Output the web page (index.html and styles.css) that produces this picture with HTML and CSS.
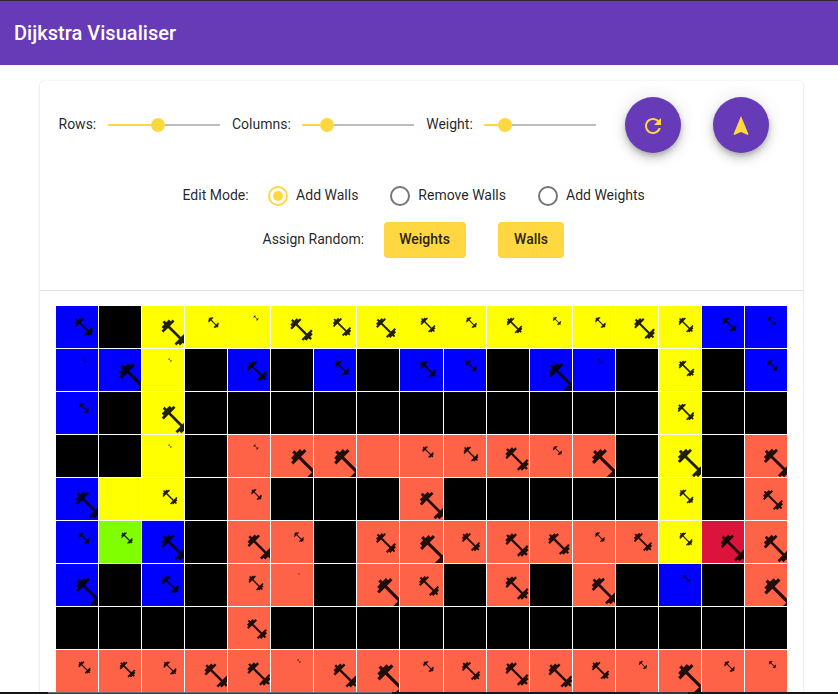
FILE: index.html
```html
<!DOCTYPE html>
<html lang="en">
<head>
<meta charset="utf-8">
<title>Dijkstra Visualiser</title>
<link rel="stylesheet" href="styles.css">
</head>
<body>
<svg class="sprite" aria-hidden="true">
  <symbol id="dumbbell" viewBox="0 0 24 24"><path d="M20.57 14.86L22 13.43 20.57 12 17 15.57 8.43 7 12 3.43 10.57 2 9.14 3.43 7.71 2 5.57 4.14 4.14 2.71 2.71 4.14l1.43 1.43L2 7.71l1.43 1.43L2 10.57 3.43 12 7 8.43 15.57 17 12 20.57 13.43 22l1.43-1.43L16.29 22l2.14-2.14 1.43 1.43 1.43-1.43-1.43-1.43L22 16.29z"/></symbol>
</svg>
<header class="toolbar"><h1 class="title">Dijkstra Visualiser</h1></header>
<main class="card">
  <section class="controls">
    <div class="row sliders">
      <span class="label rows-label">Rows:</span>
      <div class="slider rows"><span class="fill"></span><span class="thumb"></span><span class="rest"></span></div>
      <span class="label columns-label">Columns:</span>
      <div class="slider columns"><span class="fill"></span><span class="thumb"></span><span class="rest"></span></div>
      <span class="label weight-label">Weight:</span>
      <div class="slider weight"><span class="fill"></span><span class="thumb"></span><span class="rest"></span></div>
      <button class="fab" aria-label="Reset"><svg viewBox="0 0 24 24"><path d="M17.65 6.35C16.2 4.9 14.21 4 12 4c-4.42 0-7.99 3.58-7.99 8s3.57 8 7.99 8c3.73 0 6.84-2.55 7.73-6h-2.08c-.82 2.33-3.04 4-5.65 4-3.31 0-6-2.69-6-6s2.69-6 6-6c1.66 0 3.14.69 4.22 1.78L13 11h7V4l-2.35 2.35z"/></svg></button>
      <button class="fab" aria-label="Start"><svg viewBox="0 0 24 24"><path d="M12 2L4.5 20.29l.71.71L12 18l6.79 3 .71-.71z"/></svg></button>
    </div>
    <div class="row modes">
      <span class="label">Edit Mode:</span>
      <label class="option"><span class="radio checked"></span><span class="text">Add Walls</span></label>
      <label class="option"><span class="radio"></span><span class="text">Remove Walls</span></label>
      <label class="option"><span class="radio"></span><span class="text">Add Weights</span></label>
    </div>
    <div class="row random">
      <span class="label">Assign Random:</span>
      <button class="btn weights-btn">Weights</button>
      <button class="btn walls-btn">Walls</button>
    </div>
  </section>
  <section class="grid" id="grid"></section>
</main>
<footer class="strip"><span class="strip-a"></span><span class="strip-b"></span><span class="strip-c"></span></footer>
<script src="grid.js"></script>
</body>
</html>
```
FILE: grid.js
```js
// Cell = state letter + weight: b queued, y path, r visited, s start, e end, w wall.
const rows = [
  'b22 w y31 y13 y6 y27 y22 y24 y18 y13 y19 y10 y13 y25 y18 b17 b10',
  'b5 b38 y4 w b24 w b18 w b20 b14 w b35 b6 w y19 w b13',
  'b12 w y33 w w w w w w w w w w w y20 w w',
  'w w y4 w r6 r37 r37 r r14 r18 r28 r11 r36 w y34 w r34',
  'b32 y y18 w r13 w w w r33 w w w w w y17 w r24',
  'b14 s14 b31 w r30 r12 w r24 r36 r22 r28 r26 r12 r22 y16 e32 r33',
  'b34 w b21 w r18 r2 w r37 r24 w r28 w r32 w b9 w r39',
  'w w w w r24 w w w w w w w w w w w w',
  'r15 r19 r16 r29 r28 r4 r29 r39 r13 r22 r28 r29 r21 r10 r37 r13 r9'
];
const names = { b: 'queued', y: 'path', r: 'visited', s: 'start', e: 'end', w: 'wall' };
document.getElementById('grid').innerHTML = rows.flatMap(row => row.split(' ').map((cell, column) => {
  const weight = Number(cell.slice(1));
  const side = column > 8 ? ' far' : '';
  const icon = weight ? `<svg class="weight-icon${side}" style="--size:${weight}px"><use href="#dumbbell"/></svg>` : '';
  return `<div class="cell ${names[cell[0]]}">${icon}</div>`;
})).join('');
```
FILE: styles.css
```css
* { box-sizing: border-box; }
body {
  margin: 0;
  height: 694px;
  overflow: hidden;
  display: flex;
  flex-direction: column;
  background: #fff;
  color: rgba(0, 0, 0, .87);
  font: 14px/20px Roboto, sans-serif;
}
.sprite { display: none; }
.toolbar {
  height: 65px;
  flex: none;
  display: flex;
  align-items: center;
  padding: 0 14px;
  border-top: 1px solid #2b2b2b;
  background: #673ab7;
  color: #fff;
}
.title { margin: 0; font-size: 20px; line-height: 32px; font-weight: 500; letter-spacing: .03px; }
.card {
  flex: none;
  width: 763px;
  height: 611px;
  margin: 16px 0 0 40px;
  border-radius: 4px 4px 0 0;
  box-shadow: 0 2px 1px -1px rgba(0,0,0,.2), 0 1px 1px rgba(0,0,0,.14), 0 1px 3px rgba(0,0,0,.12), 0 0 1px rgba(0,0,0,.12);
}
.controls { height: 210px; padding-top: 16px; border-bottom: 1px solid #e0e0e0; }
.row { display: flex; align-items: center; }
.label { white-space: nowrap; padding: 0 0 2px .5px; }
.sliders { height: 56px; padding-left: 18px; }
.rows-label { width: 50px; }
.columns-label { width: 70px; margin-left: 12px; padding-left: 0; }
.weight-label { width: 58px; margin-left: 12px; padding-left: .2px; }
.slider { display: flex; align-items: center; width: 112px; flex: none; }
.fill { height: 2px; background: #ffd740; }
.rest { height: 2px; flex: 1; background: #bdbdbd; }
.thumb { width: 14px; height: 14px; border-radius: 50%; background: #ffd740; }
.rows .fill { width: 43px; }
.columns .fill { width: 18px; }
.weight .fill { width: 14px; }
.fab {
  width: 56px;
  height: 56px;
  flex: none;
  margin-left: 29px;
  padding: 1px 0 0;
  border: 0;
  border-radius: 50%;
  display: grid;
  place-items: center;
  background: #673ab7;
  color: #ffd740;
  box-shadow: 0 3px 5px -1px rgba(0,0,0,.2), 0 6px 10px rgba(0,0,0,.14), 0 1px 18px rgba(0,0,0,.12);
}
.fab + .fab { margin-left: 32px; }
.fab svg { width: 24px; height: 24px; fill: currentColor; }
.modes { height: 24px; margin-top: 31px; padding-left: 142px; }
.option { display: flex; align-items: center; gap: 8px; margin-left: 32px; white-space: nowrap; }
.label + .option { margin-left: 19.5px; }
.text { padding-bottom: 2px; }
.radio {
  width: 20px;
  height: 20px;
  border: 2px solid #757575;
  border-radius: 50%;
  display: grid;
  place-items: center;
}
.checked { border-color: #ffd740; }
.checked::after { content: ""; width: 10px; height: 10px; border-radius: 50%; background: #ffd740; }
.random { height: 36px; margin-top: 14px; padding-left: 222px; }
.btn {
  height: 36px;
  padding: 0 0 2px;
  border: 0;
  border-radius: 4px;
  background: #ffd740;
  color: rgba(0, 0, 0, .87);
  font: 500 14px/34px Roboto, sans-serif;
}
.weights-btn { width: 82px; margin-left: 19.5px; }
.walls-btn { width: 66px; margin-left: 32px; padding-left: 1px; }
.grid {
  display: grid;
  grid-template-columns: repeat(8, 42px) 43px repeat(8, 42px);
  grid-auto-rows: 42px;
  gap: 1px;
  padding: 15px 16px 0;
}
.cell { overflow: hidden; }
.weight-icon {
  --shift: 0px;
  display: block;
  width: var(--size);
  height: var(--size);
  margin-left: calc(max(17.2px, 28.3px - var(--size) / 2) - var(--shift));
  margin-top: calc(9.2px + var(--size) * .045);
  fill: rgba(0, 0, 0, .87);
}
.far { --shift: 1px; }
.queued { background: #00f; }
.path { background: #ff0; }
.visited { background: #ff6347; }
.start { background: #7fff00; }
.end { background: #dc143c; }
.wall { background: #000; }
.strip { display: flex; height: 2px; background: #161616; }
.strip-a { width: 48px; }
.strip-b { width: 344px; background: linear-gradient(#6a6a6a 50%, #3c3c3c 50%); }
.strip-c { width: 48px; margin-left: 248px; background: #363636; }
```
